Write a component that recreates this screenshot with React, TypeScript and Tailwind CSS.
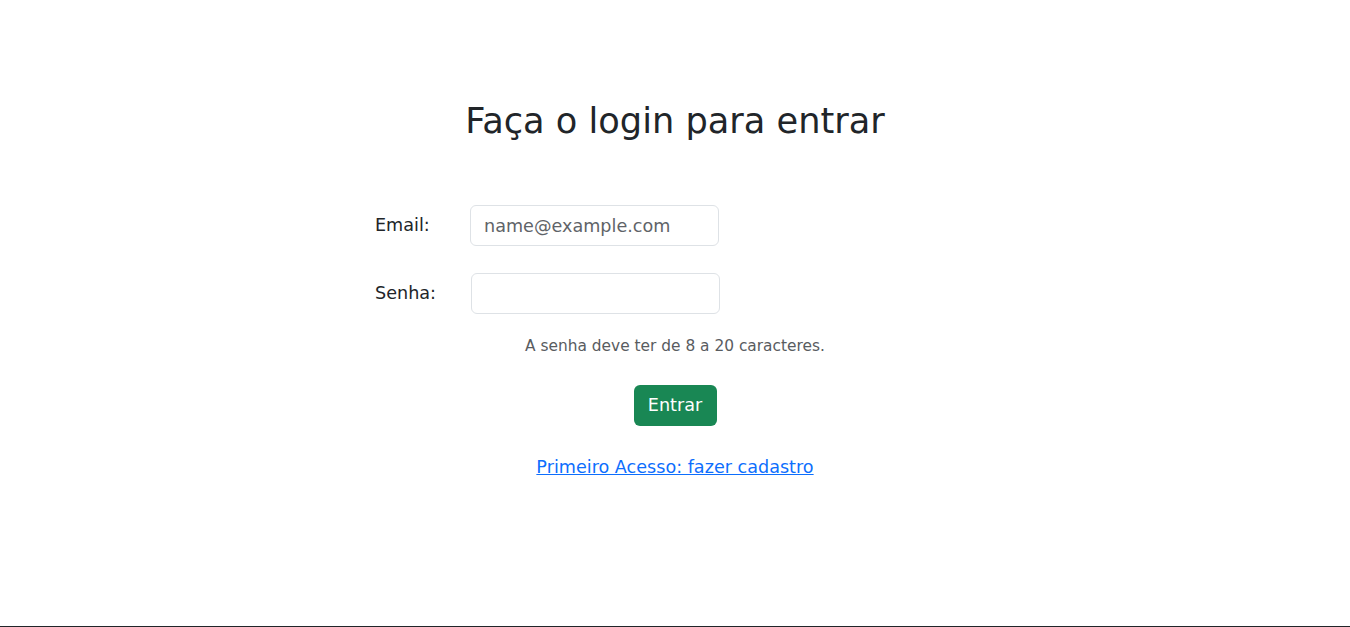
import React from 'react';

const App = () => {
  return (
    <div className="font-['DejaVu_Sans',sans-serif] text-[17.6px] text-[#212529] bg-white">
      <main className="min-h-[626px] flex flex-col items-center">
        <h1 className="mt-[97px] text-[35.2px] leading-[48px] font-normal">Faça o login para entrar</h1>

        <form className="mt-[60px] flex flex-col items-center" onSubmit={(e) => e.preventDefault()}>
          <div className="w-[600px] flex flex-col gap-[27px]">
            <div className="flex items-center">
              <label htmlFor="email" className="w-[95px]">Email:</label>
              <input
                id="email"
                type="email"
                placeholder="name@example.com"
                className="w-[249px] h-[41px] px-[13px] border border-[#dee2e6] rounded-[6px] placeholder:text-[#5f6368] outline-none"
              />
            </div>
            <div className="flex items-center">
              <label htmlFor="senha" className="w-[96px]">Senha:</label>
              <input
                id="senha"
                type="password"
                className="w-[249px] h-[41px] px-[13px] border border-[#dee2e6] rounded-[6px] outline-none"
              />
            </div>
          </div>

          <p className="mt-[21px] text-[15.4px] leading-[23px] text-[#595c5f]">A senha deve ter de 8 a 20 caracteres.</p>

          <button type="submit" className="mt-[27px] w-[83px] h-[41px] rounded-[6px] bg-[#198754] text-white">
            Entrar
          </button>

          <a href="#" className="mt-[28px] text-[#0d6efd] underline leading-[26px]">Primeiro Acesso: fazer cadastro</a>
        </form>
      </main>
      <footer className="h-[60px] bg-[#212529]" />
    </div>
  );
};

export default App;
